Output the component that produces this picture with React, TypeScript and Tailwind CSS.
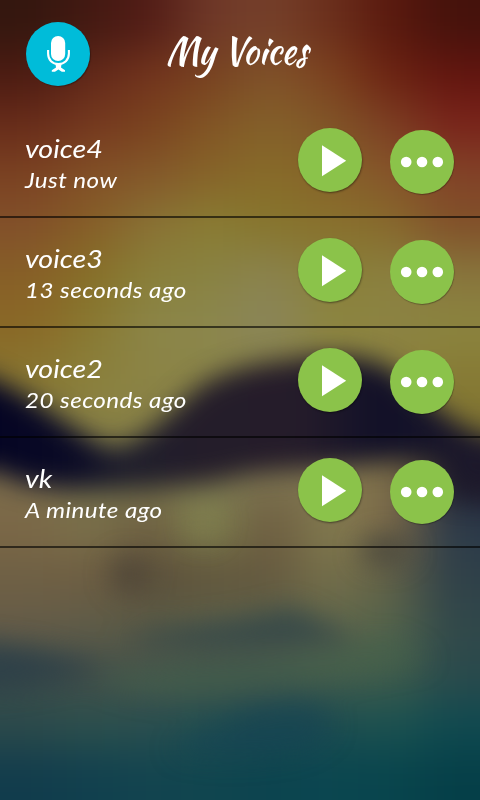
import React from 'react'

interface IVoice {
  name: string
  time: string
}

const voices: IVoice[] = [
  {name: 'voice4', time: 'Just now'},
  {name: 'voice3', time: '13 seconds ago'},
  {name: 'voice2', time: '20 seconds ago'},
  {name: 'vk', time: 'A minute ago'},
]

// Each row is a 50px band of the wallpaper, each colour a 60px cell
const wallpaper = [
  '34170f 431912 521c16 6f3828 75402a 6b2f1c 5a190e 45120c',
  '4c1b12 622819 73341d 784220 80532a 7d421f 6c2312 62150f',
  '682c1a 75381f 7a421e 825525 84612a 805528 7c3f23 7a241b',
  '7b4222 825026 84582a 866429 876c29 876329 86562a 824328',
  '82502a 865e27 897235 897d33 87752d 88712d 876a2c 815029',
  '875f27 877027 89803a 898242 8a8350 897f38 8a8140 88763d',
  '8a6826 897830 8b8548 8b874c 8a855c 8c853f 8c8343 8b843f',
  '887530 8a803b 8b8446 8a8448 8a8448 8c8440 8b823f 877b35',
  '807840 8a8145 888146 807a46 75704a 756a48 7c7040 807432',
  '7a6c4c 6a6848 74704a 7a7650 7c7250 7f7450 80704a 1f1b2b',
  '7c6847 7c734b 706042 7f824f 6d5b40 837d50 7e6a48 2c3a4a',
  '6f6044 6f5e42 5a4e3a 62563c 65593f 77704a 626046 2f4049',
  '665c48 5f5c48 5c5b45 5d6048 5c6048 60664b 56654b 31484a',
  '3c4c49 444f49 44524b 3e504b 3c504c 425a4b 405c4b 2a4a4c',
  '2c4a4b 2c504d 2a4f4f 225050 1c4a50 1c4c50 1c5250 104a50',
  '113c4c 11404e 12444f 10454f 0c444f 0b4650 08454d 053f48',
].map((row) => row.split(' '))

const Wallpaper = (): React.ReactElement => (
  <svg className="absolute inset-0" width="480" height="800" viewBox="0 0 480 800" aria-hidden="true">
    <defs>
      <filter
        id="mesh"
        filterUnits="userSpaceOnUse"
        x="-160"
        y="-160"
        width="800"
        height="1120"
        colorInterpolationFilters="sRGB"
      >
        <feGaussianBlur stdDeviation="26 22" />
      </filter>
      <filter
        id="hills"
        filterUnits="userSpaceOnUse"
        x="-160"
        y="200"
        width="800"
        height="720"
        colorInterpolationFilters="sRGB"
      >
        <feGaussianBlur stdDeviation="13" />
      </filter>
      <linearGradient id="hillFill" gradientUnits="userSpaceOnUse" x1="0" y1="0" x2="480" y2="0">
        <stop offset="0" stopColor="#050524" />
        <stop offset="0.15" stopColor="#0b0b26" />
        <stop offset="0.27" stopColor="#1f1e2c" />
        <stop offset="0.42" stopColor="#241d2a" />
        <stop offset="0.62" stopColor="#251c2a" />
        <stop offset="0.8" stopColor="#111028" />
        <stop offset="1" stopColor="#1d192b" />
      </linearGradient>
    </defs>
    <g filter="url(#mesh)">
      {wallpaper.map((row, y) =>
        row.map((color, x) => {
          const left = x === 0 ? -120 : x * 60
          const right = x === 7 ? 600 : x * 60 + 61
          const top = y === 0 ? -120 : y * 50
          const bottom = y === 15 ? 920 : y * 50 + 51
          return (
            <rect key={`${x}-${y}`} x={left} y={top} width={right - left} height={bottom - top} fill={`#${color}`} />
          )
        }),
      )}
    </g>
    <g filter="url(#hills)">
      <path
        d="M-80 345 L0 382 C35 398 70 430 112 450 C145 442 170 412 198 388 C225 370 255 364 290 360 C325 352 365 354 392 370 C420 392 450 424 490 442 L580 446 V496 H456 L442 466 L400 460 L330 466 L255 472 L210 482 L150 488 L60 488 L20 482 L0 472 L-80 468Z"
        fill="url(#hillFill)"
      />
      <ellipse cx="130" cy="574" rx="20" ry="18" fill="#4a4136" opacity="0.7" />
      <path
        d="M120 640 C180 622 240 626 285 608 C310 612 335 632 360 640 C290 650 190 652 120 640Z"
        fill="#334749"
        opacity="0.85"
      />
      <ellipse cx="385" cy="550" rx="26" ry="15" fill="#40403a" opacity="0.7" />
      <path d="M-80 640 L0 644 C40 650 70 660 110 668 C70 680 30 690 -80 696Z" fill="#283c48" opacity="0.75" />
      <path
        d="M90 676 C180 660 300 668 390 640 L430 660 C350 674 260 696 190 696 C150 696 120 690 90 676Z"
        fill="#46624b"
        opacity="0.6"
      />
      <path
        d="M170 750 C220 720 260 704 310 704 C340 716 340 735 300 750 C250 760 210 760 170 750Z"
        fill="#144254"
        opacity="0.5"
      />
      <ellipse cx="203" cy="522" rx="20" ry="20" fill="#87884f" opacity="0.35" />
    </g>
  </svg>
)

const MicButton = (): React.ReactElement => (
  <button
    type="button"
    aria-label="Record"
    className="flex size-16 items-center justify-center rounded-full bg-[#00bcd9] shadow-[1px_1px_1px_rgba(0,0,0,0.3)]"
  >
    <svg width="64" height="64" viewBox="0 0 64 64" fill="#fff">
      <rect x="25" y="14" width="14.2" height="25" rx="7.1" />
      <path
        d="M22.1 28 V31.5 C22.1 38 26.5 42 32.4 42 C38.3 42 42.9 38 42.9 31.5 V28"
        fill="none"
        stroke="#fff"
        strokeWidth="2.1"
      />
      <path d="M29.5 42 H35.5 L35 45.4 L39 48.3 V49.8 H35.8 L32.4 47.5 L29 49.8 H25.8 V48.3 L30 45.4Z" />
    </svg>
  </button>
)

const PlayButton = (): React.ReactElement => (
  <button
    type="button"
    aria-label="Play"
    className="size-16 rounded-full bg-[#8bc34a] shadow-[0.5px_1px_2px_rgba(0,0,0,0.45)]"
  >
    <svg width="64" height="64" viewBox="0 0 64 64" fill="#fff">
      <path d="M24 17.2 V48.2 L48.2 32.7Z" />
    </svg>
  </button>
)

const MoreButton = (): React.ReactElement => (
  <button
    type="button"
    aria-label="More"
    className="mt-0.5 size-16 rounded-full bg-[#8bc34a] shadow-[0.5px_1px_1px_rgba(0,0,0,0.3)]"
  >
    <svg width="64" height="64" viewBox="0 0 64 64" fill="#fff">
      <circle cx="16.2" cy="32" r="5.3" />
      <circle cx="32" cy="32" r="5.3" />
      <circle cx="47.8" cy="32" r="5.3" />
    </svg>
  </button>
)

const VoiceRow = ({voice}: {voice: IVoice}): React.ReactElement => (
  <li className="flex h-[110px] items-start border-b-2 border-black/60 pt-5 pr-[26px] pl-[25px]">
    <div className="flex-grow origin-left scale-x-[1.1] pt-[5px] whitespace-nowrap italic">
      <div className="text-[26px] leading-[31px]">{voice.name}</div>
      <div className="text-[22px] leading-[31px] tracking-[0.4px]">{voice.time}</div>
    </div>
    <div className="flex gap-7">
      <PlayButton />
      <MoreButton />
    </div>
  </li>
)

const App = (): React.ReactElement => (
  <main className="relative h-[800px] w-[480px] overflow-hidden bg-[#3a1a12] font-['Lato',sans-serif] text-white">
    <Wallpaper />
    <div className="relative">
      <header className="flex h-[108px] items-start pt-[22px] pl-[26px]">
        <MicButton />
        <h1 className="ml-[76px] origin-left scale-x-[0.92] font-['Kaushan_Script',cursive] text-[38px] leading-[58px] whitespace-nowrap">
          My Voices
        </h1>
      </header>
      <ul>
        {voices.map((voice) => (
          <VoiceRow key={voice.name} voice={voice} />
        ))}
      </ul>
    </div>
  </main>
)

export default App
